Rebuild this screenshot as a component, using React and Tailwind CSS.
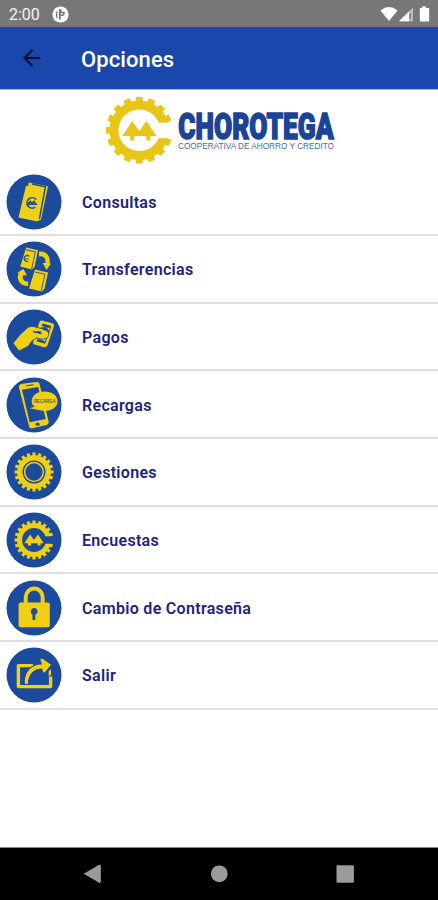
// Opciones.jsx
import { memo } from "react";

/* ================= GEAR ================= */

const gearPath = (cx, cy, outer, body, teeth) => {
  const step = (Math.PI * 2) / teeth;
  const points = [];

  for (let i = 0; i < teeth; i++) {
    const a = i * step - Math.PI / 2;
    [
      [body, -0.3],
      [outer, -0.25],
      [outer, 0.25],
      [body, 0.3],
    ].forEach(([r, k]) => {
      const x = cx + r * Math.cos(a + k * step);
      const y = cy + r * Math.sin(a + k * step);
      points.push(`${x.toFixed(2)} ${y.toFixed(2)}`);
    });
  }

  return `M${points.join("L")}Z`;
};

/* ================= LOGO ================= */

const Logo = () => (
  <svg width="232" height="70" viewBox="0 0 232 70" className="block overflow-visible">
    <path d={gearPath(34.3, 34.3, 33.4, 29.8, 16)} fill="#e9c615" />
    <circle cx="34.3" cy="34.3" r="20.8" fill="#fff" />
    <path d="M46 26.6H70V42.2H46Z" fill="#fff" />
    <path
      d="M17.3 40L27.2 25L34.3 35L41.4 25L51.5 40H45.4V44.6H41.4V40H29.2V44.6H25.2V40Z"
      fill="#e9c615"
    />
    <text
      x="73.2"
      y="42.9"
      textLength="155.5"
      lengthAdjust="spacingAndGlyphs"
      fontFamily="Roboto, sans-serif"
      fontWeight="900"
      fontSize="36"
      fill="#1b4397"
      stroke="#1b4397"
      strokeWidth="1.5"
    >
      CHOROTEGA
    </text>
    <text
      x="73"
      y="53"
      textLength="156"
      lengthAdjust="spacingAndGlyphs"
      fontFamily="Liberation Sans, sans-serif"
      fontSize="8.2"
      fill="#52699f"
    >
      COOPERATIVA DE AHORRO Y CREDITO
    </text>
  </svg>
);

/* ================= OPTION ICONS ================= */

const Consultas = () => (
  <>
    <path d="M22.5 8.4L42 12.2L35 45.8L31.8 47L19.5 44Z" fill="#efd012" />
    <path d="M26 9.9L39.4 12.8L33.4 45" fill="none" stroke="#1c4a9c" strokeWidth="1.5" />
    <path d="M22.6 11.8L37 14.5L31.2 47.5L12.5 43.5L19.8 12.6Q20.4 11.4 22.6 11.8Z" fill="#efd012" />
    <path
      d="M30.2 25.6A5.2 5.2 0 1 0 29.2 33.2M21.8 30.2L24.3 27.4L26 29.4L28 27.4L30 30.2H21.8"
      fill="none"
      stroke="#1c4a9c"
      strokeWidth="1.6"
    />
  </>
);

const Transferencias = () => (
  <>
    <path d="M20.2 6.4L32 9.2L28.5 26L25.8 28.6L14.2 25.4Z" fill="#efd012" />
    <path d="M20 8.8L29.4 10.8L25.6 28" fill="none" stroke="#1c4a9c" strokeWidth="0.9" />
    <path d="M23.4 15.4A3 3 0 1 0 22.3 20.3M18.8 18H22.5" fill="none" stroke="#1c4a9c" strokeWidth="1.2" />
    <path d="M29 28.6L42 31.4L38.5 47.8L35.7 50.5L23 47.4Z" fill="#efd012" />
    <path d="M29 31L39 33.2L35.2 50" fill="none" stroke="#1c4a9c" strokeWidth="0.9" />
    <path d="M33 10.8C39.5 9.2 44.8 14.5 43.6 22.4H45L40.5 29L36.6 22H39.4C40.2 17.5 37.6 15 33 15.4Z" fill="#efd012" />
    <path d="M22.2 45.2C14 44.8 9.8 38.8 12.6 32H11L17.3 28L21 34.2H17.2C15.8 38 18 40.5 22.2 40.6Z" fill="#efd012" />
  </>
);

const Pagos = () => (
  <>
    <path
      d="M36 11.5L46.5 14.2Q48.5 14.8 48 17L41.5 36.2Q40.5 38.8 38 38.2L28.5 35.6Q26.5 35 27.3 32.5L33.2 13.5Q34 11 36 11.5Z"
      fill="#efd012"
    />
    <path d="M36.5 14.5L45.3 17L39.2 34.7L30.5 32.3Z" fill="#1c4a9c" />
    <path d="M36.2 16.4Q39.8 19.8 43.8 18.4L38.8 32.8Q35.4 29.4 31.4 30.6Z" fill="#efd012" />
    <ellipse cx="38" cy="24.2" rx="5.2" ry="6.2" fill="#1c4a9c" />
    <path
      d="M7 34.2L14.3 25.3L22 18.3Q25 16.8 28.5 17.7L36.5 19.8Q39 21 36.8 22.8L31 22.5L37.6 26.8Q39.3 29.5 36 30.3L30.2 28.8L25.6 32.4L22.2 37.2L13 42Z"
      fill="#efd012"
      stroke="#1c4a9c"
      strokeWidth="0.9"
    />
    <circle cx="38.2" cy="25.4" r="4.2" fill="#efd012" />
    <path d="M27 22.6L35.5 24.4" stroke="#1c4a9c" strokeWidth="1.5" />
  </>
);

const Recargas = () => (
  <>
    <path
      d="M16.2 6.8L30.5 5Q33 4.7 33.6 7L42.6 44.6Q43 47.2 40.5 48L26.5 51.3Q23.8 51.8 23 49.2L13 10.8Q12.5 7.5 16.2 6.8Z"
      fill="#efd012"
    />
    <path d="M16 12.8L32.2 10L39.7 42L23.7 45.2Z" fill="#1c4a9c" />
    <path d="M20.2 8.8L27.5 7.7" stroke="#1c4a9c" strokeWidth="1.1" />
    <ellipse cx="31.6" cy="47.2" rx="2" ry="1.6" fill="#1c4a9c" />
    <path
      d="M38.4 14.6C46 14.6 51.5 18.5 51.5 24.3C51.5 30.6 45.5 34 38.3 34L32.2 33L23.6 31.2L28.6 29.8C26.5 28.2 25.7 26.4 25.7 24.3C25.7 18.8 31 14.6 38.4 14.6Z"
      fill="#efd012"
    />
    <text
      x="28"
      y="25.8"
      textLength="21.5"
      lengthAdjust="spacingAndGlyphs"
      fontFamily="Liberation Sans, sans-serif"
      fontWeight="700"
      fontSize="5"
      fill="#52683e"
    >
      RECARGA
    </text>
  </>
);

const Gestiones = () => (
  <>
    <path d={gearPath(28, 28, 19.6, 16.9, 20)} fill="#efd012" />
    <circle cx="28" cy="28" r="11.5" fill="#1c4a9c" />
    <circle cx="28" cy="28" r="9.4" fill="none" stroke="#efd012" strokeWidth="1.5" />
  </>
);

const Encuestas = () => (
  <>
    <path d={gearPath(28, 28, 19.6, 17, 20)} fill="#efd012" />
    <circle cx="28" cy="28" r="11.9" fill="#1c4a9c" />
    <path d="M36 24.3H49V31.7H36Z" fill="#1c4a9c" />
    <path d="M18.4 31.2L24 22.4L28 28L32 22.4L37.6 31.2H34.6V33.4H31.6V31.2H25V33.4H22V31.2Z" fill="#efd012" />
  </>
);

const Contrasena = () => (
  <>
    <path d="M19.7 29V17.7A8.5 9.3 0 0 1 36.7 17.7V29" fill="none" stroke="#efd012" strokeWidth="4" />
    <rect x="12.6" y="22.4" width="31.2" height="24.8" rx="1.8" fill="#efd012" />
    <path d="M24.9 32A3.3 3.3 0 1 1 29.3 34.5V40H26.5V34.8Q24.9 34 24.9 32Z" fill="#1c4a9c" />
  </>
);

const Salir = () => (
  <>
    <path d="M27 18.6H12.4V39.6H44.6V29.5" fill="none" stroke="#efd012" strokeWidth="3.4" strokeLinejoin="round" />
    <path d="M45 22V28L42.6 29V24.4Z" fill="#efd012" />
    <path
      d="M19 36.8C18.8 24.6 25 17.7 36 17.6L34.3 11.3L44.3 17.9L37.3 26L36.3 21.6C27.5 21.8 22.3 27 21.8 36.8Z"
      fill="#efd012"
      stroke="#1c4a9c"
      strokeWidth="2"
      paintOrder="stroke"
    />
    <path
      d="M20.3 36.6C20 25.6 26 19.6 37.4 19.6M35.3 12.8L42.8 18L37.8 24.2"
      fill="none"
      stroke="#efd012"
      strokeWidth="3"
    />
  </>
);

const OPTIONS = [
  { label: "Consultas", Icon: Consultas },
  { label: "Transferencias", Icon: Transferencias },
  { label: "Pagos", Icon: Pagos },
  { label: "Recargas", Icon: Recargas },
  { label: "Gestiones", Icon: Gestiones },
  { label: "Encuestas", Icon: Encuestas },
  { label: "Cambio de Contraseña", Icon: Contrasena },
  { label: "Salir", Icon: Salir },
];

/* ================= OPTION ROW ================= */

const OptionRow = memo(function OptionRow({ label, Icon }) {
  return (
    <button className="flex h-[67.7px] w-full items-center border-b-2 border-[#dedede] pl-1.5 text-left">
      <svg width="56" height="56" viewBox="0 0 56 56" className="mt-px shrink-0">
        <circle cx="28" cy="28" r="27.5" fill="#1c4a9c" />
        <Icon />
      </svg>
      <span className="ml-5 pt-[3px] text-[16px] font-semibold tracking-[0.31px] text-[#1d2380]">
        {label}
      </span>
    </button>
  );
});

/* ================= BARS ================= */

const StatusBar = () => (
  <div className="flex h-[27px] items-center justify-between bg-[#777] pt-px pr-2 pl-[9px] text-[#f4f4f4]">
    <div className="flex items-center gap-3">
      <span className="pt-0.5 text-[16px] leading-none">2:00</span>
      <svg width="17" height="17" viewBox="0 0 17 17">
        <circle cx="8.5" cy="8.5" r="8.1" fill="#fff" />
        <path
          d="M6.9 3.2H9.6V5.7H12.7V7.8Q12.7 10 10.4 10H8.7V13.6H6.9ZM5.4 4.2Q3.6 5.7 3.9 9.4Q4.1 11.8 5.4 12.8Z"
          fill="#777"
        />
        <path d="M8.7 7H10.8V8.5H8.7Z" fill="#fff" />
      </svg>
    </div>
    <svg width="51" height="17" viewBox="0 0 51 17">
      <path d="M1.5 4.5Q10 -2.3 18.5 4.5L10 15Z" fill="#fff" />
      <path d="M34 1.5V15.2H20Z" fill="#bdbdbd" />
      <path d="M30 5.4V15.2H20Z" fill="#fff" />
      <path d="M31.2 7V13" stroke="#777" strokeWidth="1.4" />
      <path d="M43 0.6H47V2H49.2Q50.2 2 50.2 3V14.4Q50.2 15.4 49.2 15.4H41.8Q40.8 15.4 40.8 14.4V3Q40.8 2 41.8 2H43Z" fill="#fff" />
    </svg>
  </div>
);

const Header = () => (
  <header className="flex h-[63px] items-center border-b border-[#adb4cf] bg-[#1a47ac] pl-[23px]">
    <svg width="18" height="18" viewBox="0 0 18 18">
      <path d="M17.3 9H2M9.4 1L1.5 9L9.4 17" fill="none" stroke="#05102e" strokeWidth="2.1" />
    </svg>
    <h1 className="ml-10 pt-0.5 text-[22px] font-medium tracking-[0.1px] text-white">Opciones</h1>
  </header>
);

const NavBar = () => (
  <nav className="h-[53px] border-t border-[#888] bg-black">
    <svg width="438" height="52" viewBox="0 848 438 52" fill="#9b9b9b">
      <path d="M83.7 873.8L99.2 864.8Q100.8 864.3 100.8 866V881.6Q100.8 883.4 99.2 882.7Z" />
      <circle cx="219.3" cy="873.8" r="8.4" />
      <rect x="336.5" y="865.2" width="17.4" height="17.6" rx="1" />
    </svg>
  </nav>
);

/* ================= PAGE ================= */

const App = () => (
  <div className="flex h-[900px] w-[438px] flex-col overflow-hidden bg-white font-[Roboto,sans-serif]">
    <StatusBar />
    <Header />
    <main className="flex-1">
      <div className="flex h-[78.3px] pt-1.5 pl-[105px]">
        <Logo />
      </div>
      {OPTIONS.map((option) => (
        <OptionRow key={option.label} {...option} />
      ))}
    </main>
    <NavBar />
  </div>
);

export default App;
